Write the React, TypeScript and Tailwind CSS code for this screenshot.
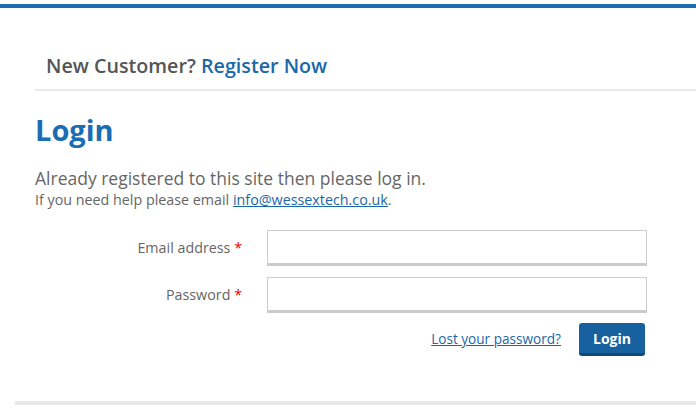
import React from "react";

function Field({ label, type }: { label: string; type: string }) {
  return (
    <div className="flex items-center">
      <label className="w-[208px] pr-[1px] text-right text-[14.3px] text-[#666]">
        {label} <span className="text-[#e00]">*</span>
      </label>
      <input
        type={type}
        className="ml-[24px] h-[36px] w-[380px] border border-[#ccc] border-b-[3px] bg-white outline-none"
      />
    </div>
  );
}

export default function App() {
  return (
    <div className="w-[696px] h-[410px] bg-white overflow-hidden font-['Open_Sans',sans-serif] text-[#555]">
      <div className="pt-1">
        <div className="h-1 bg-[#1b6db3]" />
      </div>

      <div className="pl-[35px]">
        <div className="pl-[11px] pt-[44px] h-[81px] text-[19.7px] leading-[28px] font-semibold text-[#555]">
          New Customer? <a className="text-[#1a68a8]">Register Now</a>
        </div>
        <div className="h-[2px] bg-[#e8e8e8]" />

        <h1 className="mt-[20px] text-[29px] leading-[38px] font-bold text-[#1b6db3]">Login</h1>

        <p className="mt-[17px] text-[17.5px] leading-[24px] text-[#666]">
          Already registered to this site then please log in.
        </p>
        <p className="mt-[1px] text-[14.3px] leading-[18px] text-[#666]">
          If you need help please email{" "}
          <a className="text-[#1a68a8] underline">info@wessextech.co.uk</a>.
        </p>

        <div className="mt-[21px] flex flex-col gap-[11px]">
          <Field label="Email address" type="email" />
          <Field label="Password" type="password" />
        </div>

        <div className="mt-[10px] w-[610px] flex items-center justify-end gap-[18px]">
          <a className="text-[13.6px] text-[#1a68a8] underline">Lost your password?</a>
          <button className="w-[66px] h-[33px] rounded-[3px] bg-[#17629e] border-b-[3px] border-[#0f4a7a] text-white text-[14px] font-bold">
            Login
          </button>
        </div>
      </div>

      <div className="mt-[45px] ml-[15px] h-[4px] bg-[#e8e8e8]" />
    </div>
  );
}
